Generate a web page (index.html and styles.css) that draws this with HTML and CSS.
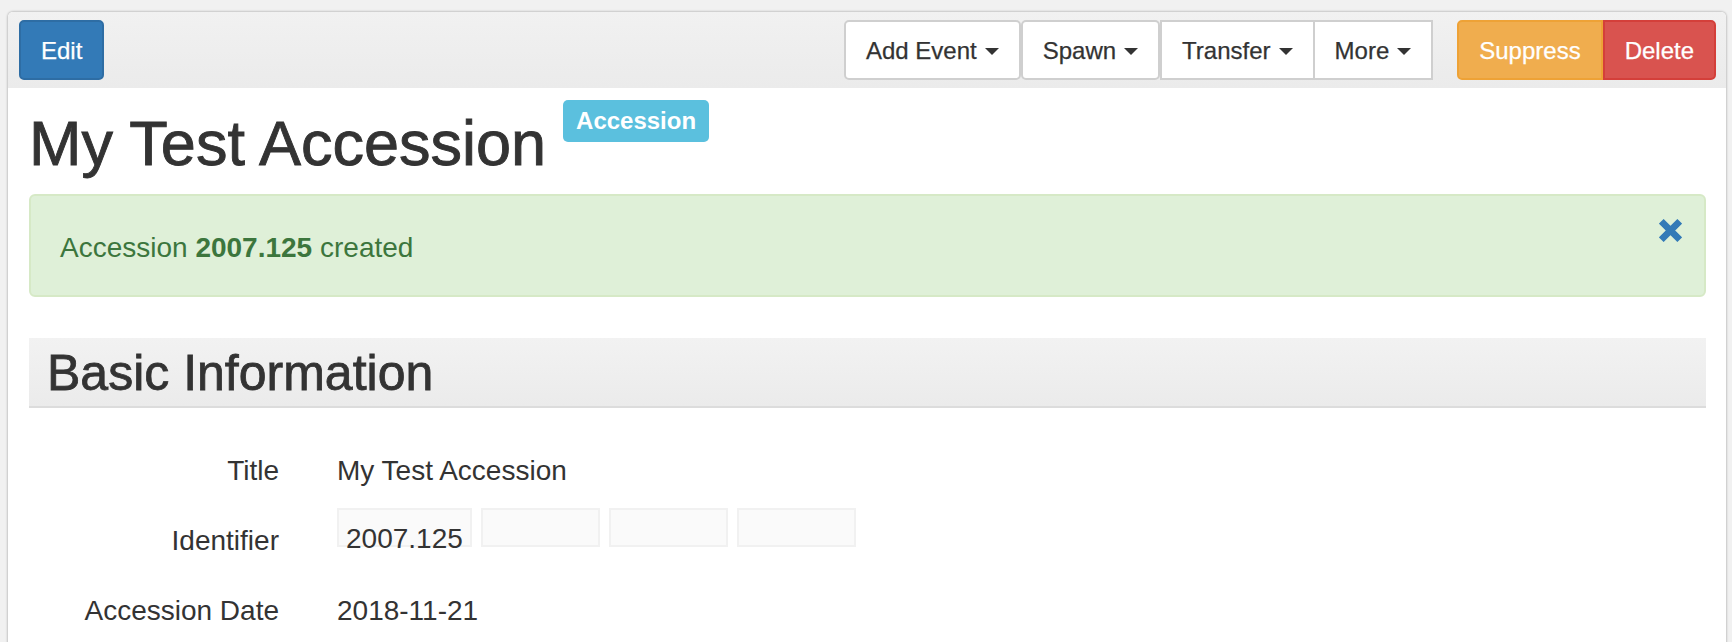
FILE: index.html
```html
<!DOCTYPE html>
<html lang="en">
<head>
<meta charset="utf-8">
<title>My Test Accession</title>
<link rel="stylesheet" href="styles.css">
</head>
<body>
<div class="page">
  <div class="toolbar">
    <button class="btn btn-primary">Edit</button>
    <div class="toolbar-right">
      <div class="btn-group">
        <button class="btn btn-default">Add Event <span class="caret"></span></button>
      </div>
      <div class="btn-group">
        <button class="btn btn-default">Spawn <span class="caret"></span></button>
      </div>
      <div class="btn-group">
        <button class="btn btn-default square">Transfer <span class="caret"></span></button>
        <button class="btn btn-default square joined">More <span class="caret"></span></button>
      </div>
      <div class="btn-group danger-group">
        <button class="btn btn-warning seg-left">Suppress</button>
        <button class="btn btn-danger seg-right">Delete</button>
      </div>
    </div>
  </div>

  <div class="content">
    <div class="record-header">
      <h1 class="record-title">My Test Accession</h1>
      <span class="label-info">Accession</span>
    </div>

    <div class="alert-success">
      <div class="alert-text">Accession <strong>2007.125</strong> created</div>
      <svg class="alert-close" width="23" height="23" viewBox="0 0 23 23" aria-label="close">
        <path d="M2.3 2.3 L20.7 20.7 M20.7 2.3 L2.3 20.7" stroke="#337ab7" stroke-width="6.6" stroke-linecap="butt" fill="none"/>
      </svg>
    </div>

    <section class="subrecord">
      <h2 class="section-title">Basic Information</h2>
      <div class="fields">
        <div class="field-label">Title</div>
        <div class="field-value">My Test Accession</div>

        <div class="field-label">Identifier</div>
        <div class="field-value">
          <div class="identifier">
            <span class="id-part">2007.125</span>
            <span class="id-part"></span>
            <span class="id-part"></span>
            <span class="id-part"></span>
          </div>
        </div>

        <div class="field-label">Accession Date</div>
        <div class="field-value">2018-11-21</div>
      </div>
    </section>
  </div>
</div>
</body>
</html>
```

FILE: styles.css
```css
* {
  box-sizing: border-box;
}

html, body {
  overflow: hidden;
}

body {
  margin: 0;
  padding: 12px 6px 0 8px;
  background: #f1f1f1;
  font-family: "Liberation Sans", Arial, Helvetica, sans-serif;
  color: #333;
  font-size: 28px;
}

.page {
  background: #fff;
  min-height: 640px;
  border-radius: 5px 5px 0 0;
  box-shadow: 0 0 2px 1px rgba(0, 0, 0, 0.18);
  overflow: hidden;
}

/* toolbar */
.toolbar {
  display: flex;
  justify-content: space-between;
  align-items: center;
  height: 76px;
  padding: 0 10px 0 11px;
  background: linear-gradient(#f1f1f1, #ebebeb);
}

.toolbar-right {
  display: flex;
  align-items: center;
}

.btn-group {
  display: flex;
}

.danger-group {
  margin-left: 24px;
}

.btn {
  display: inline-flex;
  align-items: center;
  gap: 8px;
  height: 60px;
  padding: 2px 20px 0;
  font-family: "Liberation Sans", Arial, Helvetica, sans-serif;
  font-size: 24px;
  border: 2px solid transparent;
  border-radius: 5px;
  cursor: pointer;
  white-space: nowrap;
  -webkit-text-stroke: 0.25px currentColor;
}

.btn-primary {
  background: #337ab7;
  border-color: #2e6da4;
  color: #fff;
}

.btn-default {
  background: #fff;
  border-color: #cfcfcf;
  color: #333;
}

.btn-warning {
  background: #f0ad4e;
  border-color: #eea236;
  color: #fff;
}

.btn-danger {
  background: #d9534f;
  border-color: #d43f3a;
  color: #fff;
}

.square {
  border-radius: 0;
}

.joined {
  margin-left: -2px;
}

.seg-left {
  border-radius: 5px 0 0 5px;
}

.seg-right {
  border-radius: 0 5px 5px 0;
}

.caret {
  display: inline-block;
  width: 0;
  height: 0;
  border-top: 7px solid #333;
  border-left: 7px solid transparent;
  border-right: 7px solid transparent;
  margin-top: 1px;
}

/* content */
.content {
  padding: 0 20px 0 21px;
}

.record-header {
  display: flex;
  align-items: flex-start;
}

.record-title {
  margin: 21px 0 0 0;
  font-size: 63px;
  line-height: 68px;
  font-weight: normal;
  color: #333;
  -webkit-text-stroke: 0.9px #333;
}

.label-info {
  margin: 12px 0 0 17px;
  height: 42px;
  line-height: 42px;
  padding: 0 13px;
  background: #5bc0de;
  color: #fff;
  font-weight: bold;
  font-size: 24px;
  border-radius: 5px;
}

.alert-success {
  display: flex;
  align-items: flex-start;
  margin-top: 17px;
  padding: 32px 22px 27px 29px;
  background: #dff0d8;
  border: 2px solid #d6e9c6;
  border-radius: 6px;
  color: #3c763d;
  line-height: 40px;
}

.alert-text {
  flex: 1;
}

.alert-close {
  margin-top: -9px;
  flex: none;
}

.section-title {
  margin: 41px 0 0;
  height: 70px;
  padding: 3px 0 0 18px;
  font-size: 50px;
  line-height: 65px;
  font-weight: normal;
  color: #333;
  -webkit-text-stroke: 0.8px #333;
  background: linear-gradient(#f2f2f2, #ebebeb);
  border-bottom: 2px solid #dcdcdc;
}

.fields {
  display: grid;
  grid-template-columns: 250px 1fr;
  column-gap: 58px;
  row-gap: 30px;
  margin-top: 43px;
  line-height: 40px;
}

.field-label {
  text-align: right;
}

.identifier {
  display: flex;
  gap: 9px;
  height: 40px;
}

.id-part {
  display: block;
  margin-top: -13px;
  height: 39px;
  min-width: 119px;
  padding: 9px 7px 0;
  background: #fafafa;
  border: 2px solid #f1f1f1;
  line-height: 40px;
  white-space: nowrap;
}
```
